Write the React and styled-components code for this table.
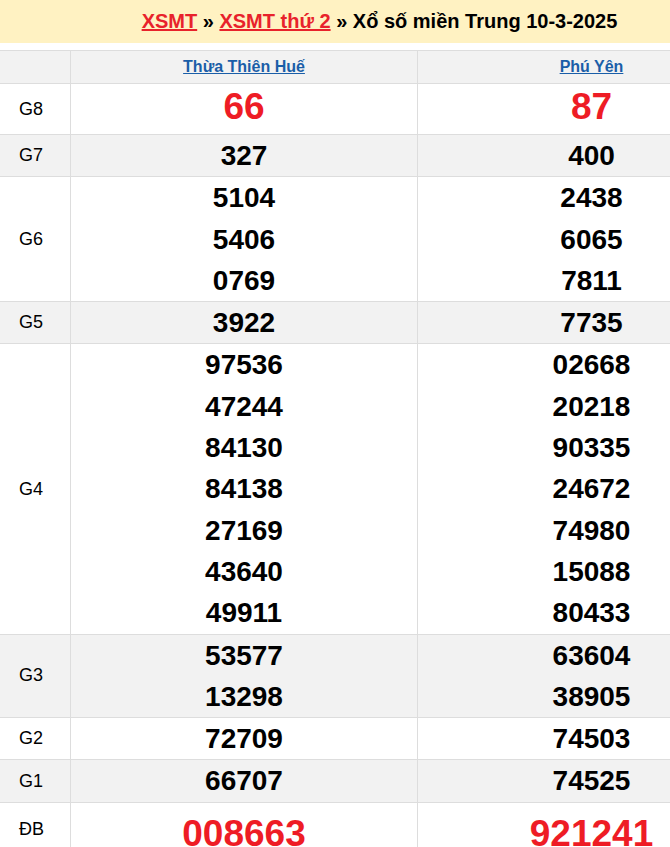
import styled, { createGlobalStyle } from "styled-components";

const GlobalStyle = createGlobalStyle`
    html, body{
        margin: 0;
        padding: 0;
        overflow: hidden;
        background: white;
        font-family: "Liberation Sans", Arial, sans-serif;
    }
`

const Page = styled.div`
    width: 765px;
`
const TopBar = styled.div`
    height: 43px;
    line-height: 43px;
    background-color: #fff2c2;
    text-align: center;
    padding-right: 6px;
    font-size: 20px;
    font-weight: 700;
    color: #000;
    margin-bottom: 7px;
    a{
        color: #e8222b;
        text-decoration: underline;
    }
`
const Table = styled.div`
    width: 100%;
    border-top: 1px solid #dddddd;
`
const Row = styled.div`
    display: grid;
    grid-template-columns: 71px 347px 1fr;
    background-color: ${p => p.$alt ? "#f2f2f2" : "white"};
    border-bottom: 1px solid #dddddd;
`
const HeadCell = styled.div`
    height: 32px;
    display: flex;
    justify-content: center;
    align-items: center;
    border-right: 1px solid #dddddd;
    &:last-child{
        border-right: none;
    }
    a{
        color: #1a5ea8;
        font-size: 16px;
        font-weight: 700;
        text-decoration: underline;
    }
`
const Label = styled.div`
    display: flex;
    align-items: center;
    padding-left: 19px;
    font-size: 18px;
    color: #000;
    border-right: 1px solid #dddddd;
`
const NumCell = styled.div`
    display: flex;
    flex-direction: column;
    align-items: center;
    padding: ${p => p.$big ? (p.$last ? "8px 0 0" : "0 0 4px") : "0"};
    border-right: 1px solid #dddddd;
    &:last-child{
        border-right: none;
    }
`
const Num = styled.div`
    font-size: ${p => p.$big ? "37px" : "28px"};
    line-height: ${p => p.$big ? "46px" : "41.3px"};
    font-weight: 700;
    color: ${p => p.$big ? "#ee1c25" : "#000"};
`

const results = [
    { name: "G8", hue: ["66"], phu: ["87"], big: true },
    { name: "G7", hue: ["327"], phu: ["400"] },
    { name: "G6", hue: ["5104", "5406", "0769"], phu: ["2438", "6065", "7811"] },
    { name: "G5", hue: ["3922"], phu: ["7735"] },
    { name: "G4", hue: ["97536", "47244", "84130", "84138", "27169", "43640", "49911"], phu: ["02668", "20218", "90335", "24672", "74980", "15088", "80433"] },
    { name: "G3", hue: ["53577", "13298"], phu: ["63604", "38905"] },
    { name: "G2", hue: ["72709"], phu: ["74503"] },
    { name: "G1", hue: ["66707"], phu: ["74525"] },
    { name: "ĐB", hue: ["008663"], phu: ["921241"], big: true, last: true },
]

const App = () => {
    return (
        <Page>
            <GlobalStyle />
            <TopBar>
                <a href="#">XSMT</a> » <a href="#">XSMT thứ 2</a> » Xổ số miền Trung 10-3-2025
            </TopBar>
            <Table>
                <Row $alt>
                    <HeadCell />
                    <HeadCell><a href="#">Thừa Thiên Huế</a></HeadCell>
                    <HeadCell><a href="#">Phú Yên</a></HeadCell>
                </Row>
                {results.map((r, i) => (
                    <Row key={r.name} $alt={i % 2 === 1}>
                        <Label>{r.name}</Label>
                        <NumCell $big={r.big} $last={r.last}>
                            {r.hue.map((n, j) => <Num key={j} $big={r.big}>{n}</Num>)}
                        </NumCell>
                        <NumCell $big={r.big} $last={r.last}>
                            {r.phu.map((n, j) => <Num key={j} $big={r.big}>{n}</Num>)}
                        </NumCell>
                    </Row>
                ))}
            </Table>
        </Page>
    )
}
export default App
